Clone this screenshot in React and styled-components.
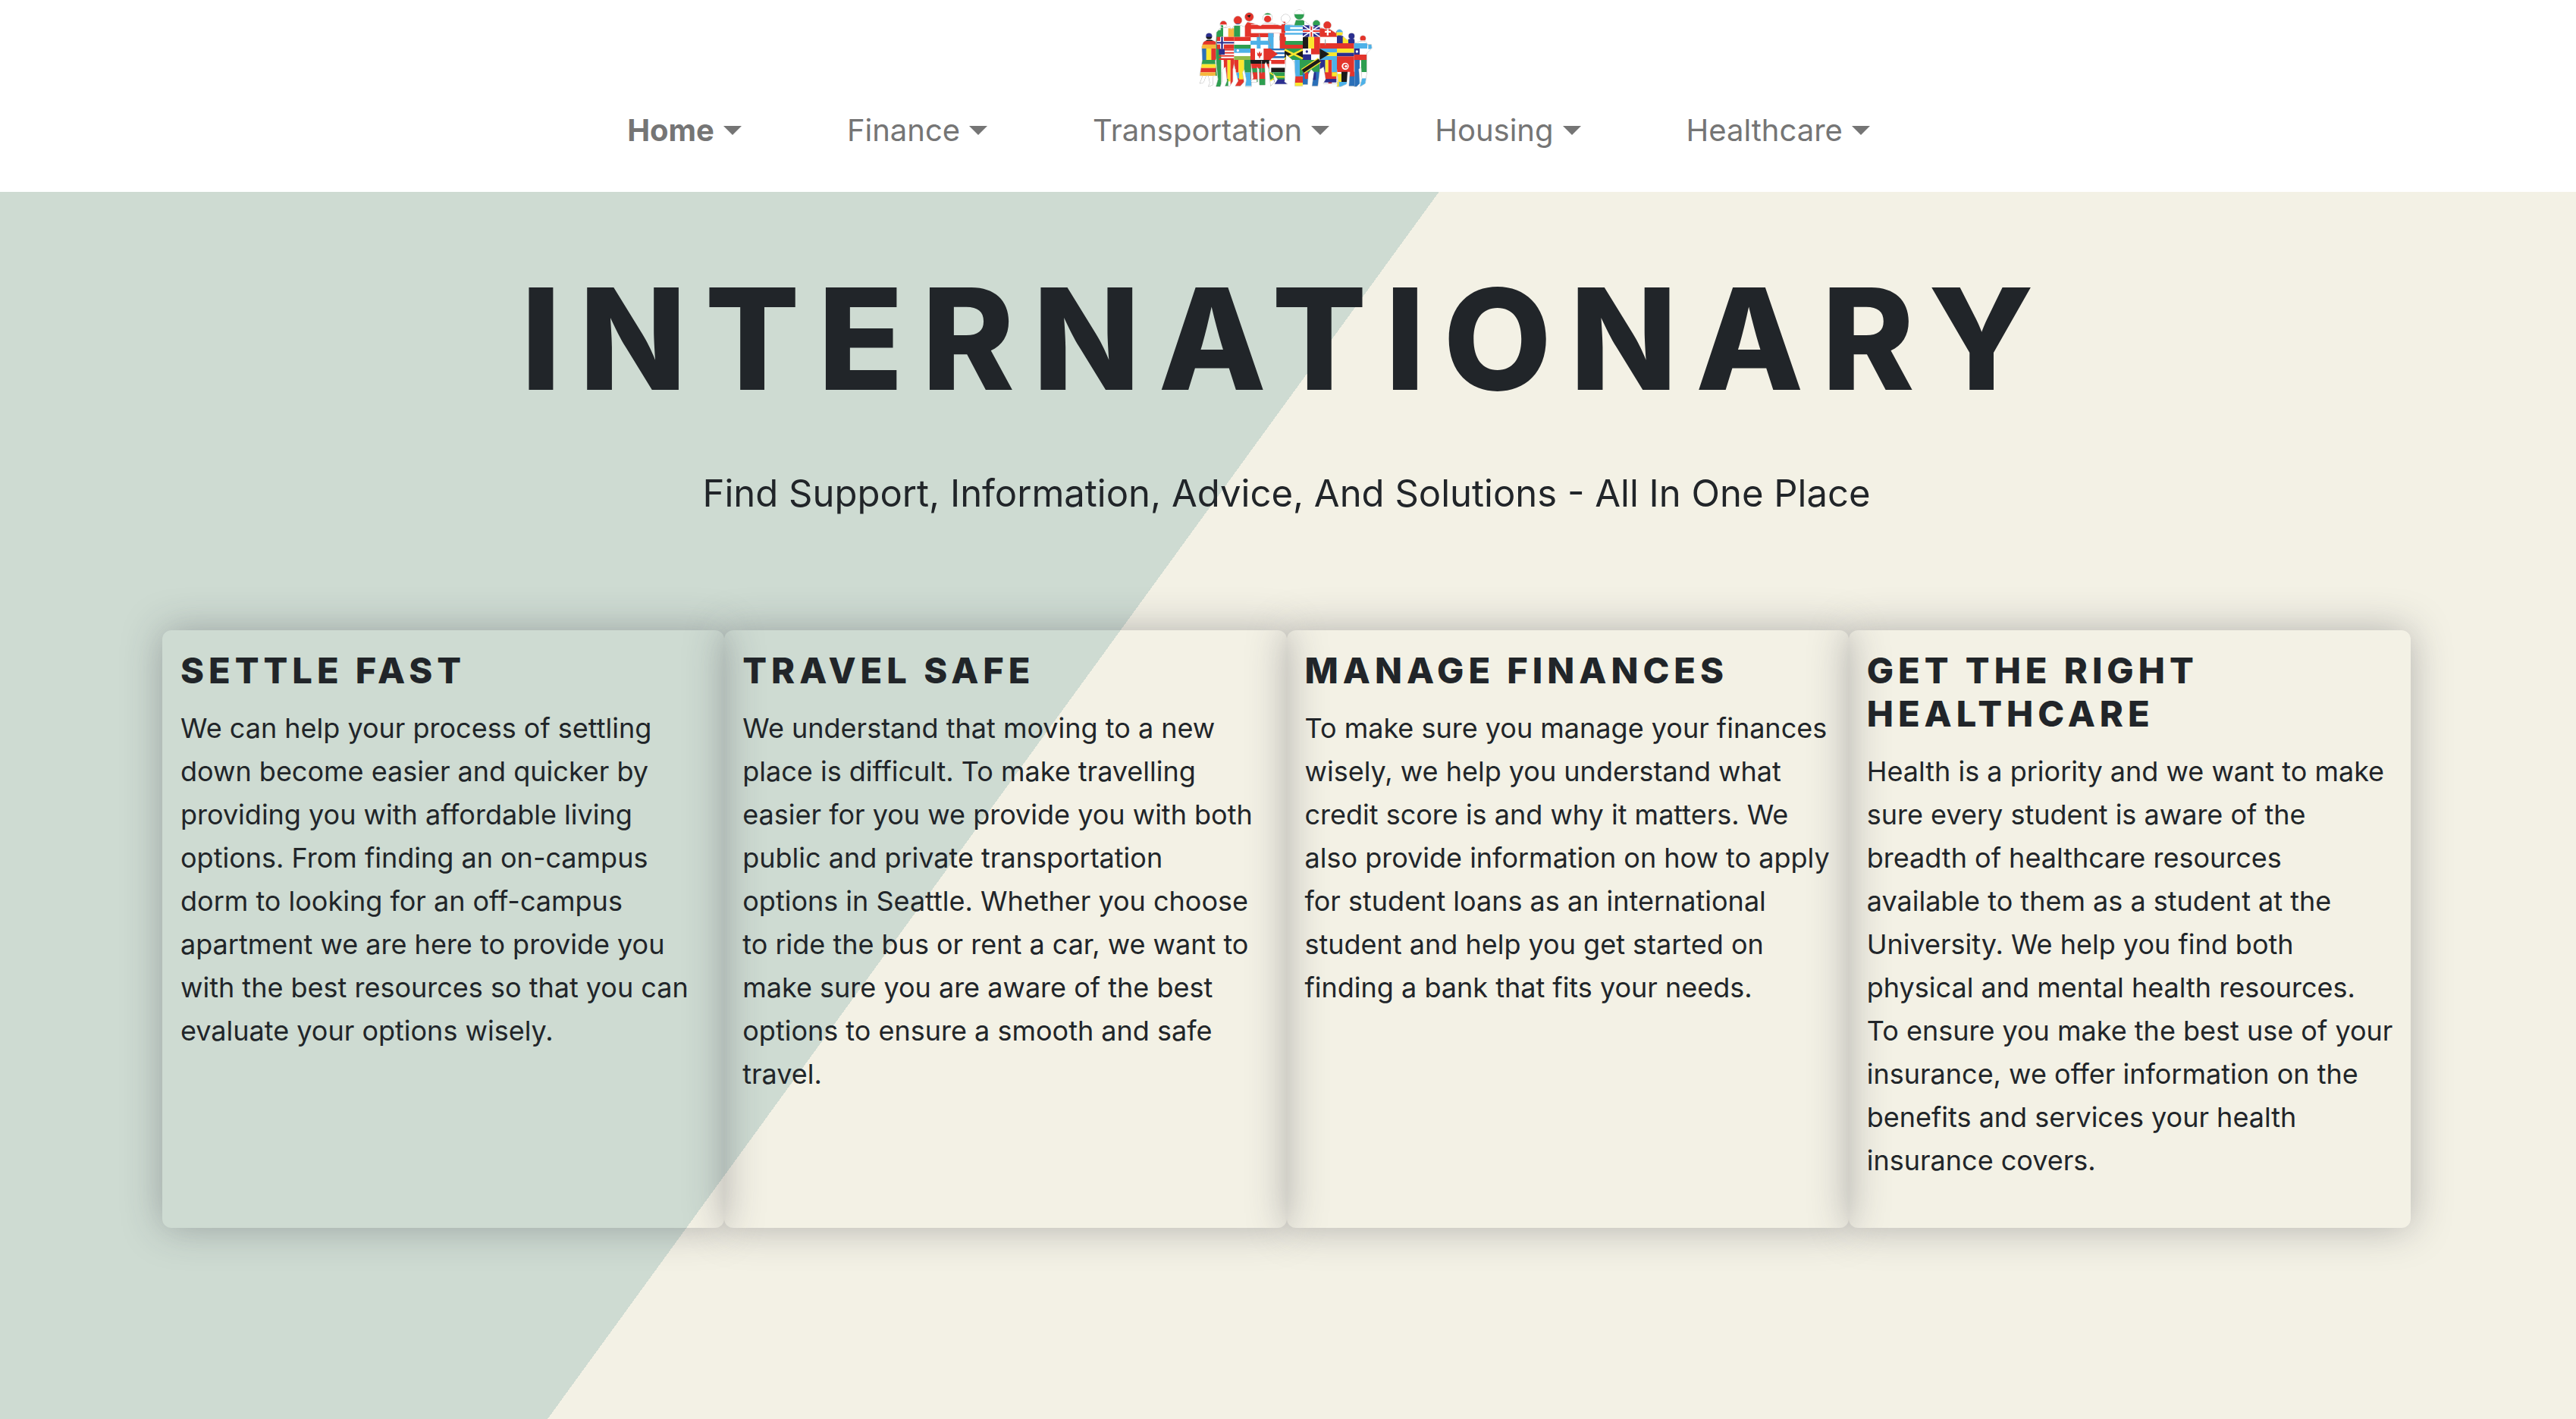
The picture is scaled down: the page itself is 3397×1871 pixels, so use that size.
import React from "react";
import styled, { createGlobalStyle } from "styled-components";

const GlobalStyle = createGlobalStyle`
  *, *::before, *::after { box-sizing: border-box; }
  body {
    margin: 0;
    font-family: Inter, "Liberation Sans", sans-serif;
    color: #212529;
    background: #f3f1e5;
  }
`;

const Page = styled.div`
  min-height: 100vh;
  display: flex;
  flex-direction: column;
`;

const Header = styled.header`
  display: flex;
  flex-direction: column;
  align-items: center;
  padding: 8px 24px 51px;
  background: #ffffff;
`;

const Brand = styled.a`
  display: block;
  width: 240px;
  height: 112px;
`;

const Nav = styled.nav`
  display: flex;
  flex-wrap: wrap;
  justify-content: center;
  gap: 139px;
  padding: 22px 104px 0 0;
`;

const NavButton = styled.button`
  display: flex;
  align-items: center;
  gap: 12px;
  padding: 0;
  border: 0;
  background: none;
  color: #757575;
  font-family: inherit;
  font-size: 40px;
  line-height: 60px;
  font-weight: ${(p) => (p.$active ? 700 : 400)};
  cursor: pointer;

  &::after {
    content: "";
    border-top: 12px solid;
    border-left: 12px solid transparent;
    border-right: 12px solid transparent;
  }
`;

const Hero = styled.main`
  flex: 1;
  display: flex;
  flex-direction: column;
  align-items: center;
  padding: 80px 218px 0 214px;
  background: linear-gradient(126deg, #cedbd2 41.5%, #f3f1e5 41.5%);
`;

const Title = styled.h1`
  margin: 0;
  font-size: 185px;
  line-height: 228px;
  font-weight: 800;
  letter-spacing: 24px;
  text-align: center;
`;

const Subtitle = styled.p`
  margin: 58px 0 0;
  font-size: 49px;
  line-height: 64px;
  text-align: center;
`;

const Cards = styled.section`
  display: grid;
  grid-template-columns: repeat(4, minmax(0, 1fr));
  width: 100%;
  margin-top: 148px;
`;

const Card = styled.article`
  padding: 24px 16px 60px 24px;
  border-radius: 12px;
  box-shadow: 0 0 52px rgba(50, 50, 65, 0.34);
`;

const CardTitle = styled.h2`
  margin: 0 0 20px;
  font-size: 47px;
  line-height: 57px;
  font-weight: 800;
  letter-spacing: 6px;
`;

const CardText = styled.p`
  margin: 0;
  font-size: 36px;
  line-height: 57px;
  white-space: pre-line;
`;

const RED = "#e3342b";
const GREEN = "#2e9e50";
const NAVY = "#2b2f8f";
const SKY = "#4db1e8";
const BLUE = "#2a6fb8";
const YELLOW = "#fbe72e";
const GOLD = "#f6b73c";
const BLACK = "#1b1b1b";
const WHITE = "#ffffff";

// Flag patches: x, y, width, height, colour
const patches = [
  [8, 100, 66, 24, NAVY], [8, 122, 66, 17, BLACK], [8, 138, 66, 15, RED], [8, 152, 66, 16, GOLD],
  [8, 168, 28, 45, BLUE], [35, 168, 20, 45, YELLOW], [55, 168, 20, 45, RED],
  [8, 213, 70, 17, GREEN], [8, 230, 70, 15, YELLOW], [8, 245, 70, 17, RED], [8, 262, 70, 14, GOLD],
  [88, 58, 30, 15, RED], [72, 95, 22, 225, GREEN], [92, 76, 10, 46, GREEN], [122, 88, 24, 34, GOLD],
  [77, 122, 68, 48, RED], [90, 122, 15, 48, WHITE], [77, 138, 68, 14, WHITE], [94, 122, 7, 48, NAVY], [77, 142, 68, 6, NAVY],
  [85, 170, 60, 6, RED], [85, 182, 60, 6, RED], [85, 194, 60, 6, RED], [85, 206, 60, 7, RED], [85, 170, 23, 22, NAVY],
  [104, 213, 15, 85, RED], [119, 213, 12, 85, YELLOW], [131, 213, 14, 107, RED], [104, 288, 18, 30, GREEN],
  [142, 36, 36, 35, RED], [142, 69, 36, 7, BLUE], [145, 78, 24, 44, GREEN], [188, 70, 24, 52, RED],
  [145, 122, 66, 16, RED], [145, 153, 66, 16, GREEN], [145, 168, 66, 17, SKY], [145, 198, 66, 16, "#91ba4b"],
  [145, 213, 18, 50, RED], [163, 213, 22, 50, YELLOW], [185, 213, 28, 50, GREEN], [145, 263, 70, 26, SKY], [145, 286, 40, 32, RED], [187, 286, 26, 30, SKY], [165, 260, 20, 30, YELLOW],
  [186, 24, 40, 48, RED], [210, 74, 136, 17, RED], [210, 107, 136, 16, RED],
  [210, 137, 75, 16, SKY], [235, 122, 15, 46, SKY],
  [210, 168, 18, 45, RED], [262, 168, 28, 45, RED],
  [210, 213, 75, 15, BLACK], [210, 228, 75, 18, RED], [210, 246, 75, 18, GREEN], [210, 262, 75, 28, RED], [235, 288, 50, 32, GREEN],
  [260, 26, 38, 8, GREEN], [280, 107, 22, 61, SKY], [302, 107, 24, 61, WHITE], [326, 122, 24, 46, RED], [332, 62, 16, 45, RED],
  [285, 168, 65, 7, BLUE], [285, 183, 65, 7, BLUE], [285, 198, 65, 8, BLUE],
  [285, 213, 65, 16, RED], [285, 244, 65, 18, BLACK], [285, 262, 60, 30, GREEN], [303, 290, 50, 22, NAVY],
  [345, 76, 72, 7, SKY], [345, 91, 72, 7, SKY], [345, 106, 72, 7, SKY], [345, 76, 22, 22, SKY], [347, 138, 70, 16, GREEN], [347, 153, 70, 16, RED],
  [383, 30, 40, 46, GREEN], [350, 168, 67, 45, GREEN],
  [385, 213, 32, 66, SKY], [385, 278, 34, 26, RED], [385, 303, 34, 16, YELLOW], [405, 213, 14, 60, GREEN],
  [455, 50, 36, 28, GREEN], [417, 76, 68, 46, NAVY], [417, 92, 68, 14, WHITE], [443, 76, 16, 46, WHITE], [417, 96, 68, 6, RED], [448, 76, 6, 46, RED],
  [417, 122, 22, 46, BLACK], [439, 122, 23, 46, YELLOW], [462, 122, 23, 46, RED],
  [450, 168, 35, 23, RED], [417, 191, 33, 22, NAVY],
  [417, 213, 66, 48, GREEN], [417, 260, 66, 58, BLUE], [425, 262, 14, 26, RED], [455, 262, 14, 30, NAVY],
  [498, 58, 34, 30, RED], [484, 88, 68, 34, RED], [512, 88, 7, 28, WHITE], [504, 98, 24, 7, WHITE],
  [484, 147, 68, 21, RED], [484, 168, 68, 15, SKY], [484, 183, 68, 15, YELLOW], [484, 198, 68, 16, SKY],
  [484, 213, 22, 55, NAVY], [506, 213, 12, 55, YELLOW], [518, 213, 14, 105, RED], [532, 213, 20, 50, SKY], [500, 262, 50, 28, RED], [500, 288, 50, 14, NAVY], [532, 262, 20, 16, YELLOW],
  [550, 92, 28, 12, SKY], [550, 104, 28, 14, YELLOW], [552, 116, 26, 32, NAVY], [575, 122, 22, 25, YELLOW], [597, 106, 25, 42, NAVY],
  [552, 147, 68, 21, RED], [552, 168, 68, 17, YELLOW], [552, 185, 68, 14, NAVY], [552, 199, 68, 62, RED], [570, 260, 24, 42, BLACK], [552, 268, 18, 50, YELLOW], [560, 300, 34, 18, SKY], [600, 260, 22, 20, RED], [600, 278, 22, 40, BLUE],
  [640, 116, 30, 20, RED], [620, 147, 52, 21, SKY], [620, 168, 22, 24, NAVY], [620, 192, 50, 22, RED], [622, 213, 20, 105, BLUE], [648, 213, 22, 48, GREEN], [640, 286, 30, 32, SKY], [676, 152, 14, 18, SKY],
];

// People in the crowd: head centre x, head centre y, head radius
const heads = [
  [46, 119, 12], [103, 72, 13], [124, 90, 8], [160, 56, 16], [205, 43, 17], [278, 46, 18],
  [349, 50, 17], [403, 34, 19], [471, 70, 14], [514, 76, 15], [562, 106, 13], [610, 119, 12], [655, 128, 11],
];

const bodies = [
  "M24 143 L38 134 H56 L72 142 L74 206 L70 218 L77 275 H10 L20 214 L18 160Z M22 275 L34 275 L24 302 L10 306Z M44 275 H62 L60 312 L44 318 L50 304Z",
  "M76 104 L92 86 H116 L134 92 L148 120 V212 L140 250 V298 L128 316 H110 L118 296 L112 240 L98 250 L96 300 L90 318 H74 L82 290 L76 230 L74 150Z",
  "M134 92 L146 78 H174 L192 86 L212 122 V232 L212 286 L214 318 H190 L194 290 L186 250 L178 262 L184 300 L170 316 H150 L162 296 L148 240 L140 200Z",
  "M186 82 L198 64 L222 70 L252 80 L282 100 V200 L266 230 L268 290 L268 312 H246 L244 250 L236 240 L238 300 H212 L222 284 L212 220Z",
  "M248 80 L266 68 H294 L330 78 L350 68 V200 L346 262 L346 286 L344 300 L356 308 H306 L318 290 L300 264 L304 300 L290 316 L284 250 L262 200Z",
  "M334 72 L384 76 L390 56 H418 L452 82 L484 92 V220 L418 250 L416 316 H386 L388 276 L384 220 L350 190 L344 160Z",
  "M418 110 L456 84 H486 L506 92 H524 L552 110 V300 L560 306 H498 L508 290 L500 240 L484 250 L476 316 H454 L462 262 L450 250 L438 270 L436 310 H416Z",
  "M546 124 L554 118 H574 L592 134 L602 130 H620 L624 150 L622 316 H600 L604 260 H594 L590 308 L568 318 H552 L558 300 L550 230Z",
  "M618 150 L644 140 H664 L672 150 L676 164 L674 152 L688 152 L690 166 L670 186 L670 260 L664 306 L644 318 L652 286 L648 240 L638 250 L642 306 L630 318 H620Z",
];

function Logo() {
  return (
    <svg viewBox="0 0 720 336" width="240" height="112" role="img" aria-label="Internationary">
      <defs>
        <clipPath id="crowd">
          {heads.map(([x, y, r]) => (
            <circle key={x} cx={x} cy={y} r={r} />
          ))}
          {bodies.map((d) => (
            <path key={d} d={d} />
          ))}
        </clipPath>
      </defs>
      <g fill="none" stroke="#b5b5b5" strokeWidth="3">
        {heads.map(([x, y, r]) => (
          <circle key={x} cx={x} cy={y} r={r} />
        ))}
        {bodies.map((d) => (
          <path key={d} d={d} />
        ))}
      </g>
      <g clipPath="url(#crowd)">
        <rect width="720" height="336" fill={WHITE} />
        {patches.map(([x, y, w, h, fill]) => (
          <rect key={`${x}-${y}-${w}-${h}`} x={x} y={y} width={w} height={h} fill={fill} />
        ))}
        <circle cx="278" cy="52" r="14" fill={RED} />
        <path d="M196 38 L212 34 L206 46Z" fill={BLACK} />
        <path d="M384 12 h38 v20 h-38Z" fill={WHITE} />
        <path d="M236 182 l6 6 4-10 4 10 6-6 -2 14 -6 4 v6 h-4 v-6 l-6-4Z" fill={RED} />
        <path d="M285 166 L318 190 L285 214Z" fill={RED} />
        <path d="M345 168 L384 190 L345 213Z M417 168 L384 190 L417 213Z" fill={BLACK} />
        <path d="M345 172 L417 208 M345 208 L417 172" stroke={YELLOW} strokeWidth="8" />
        <path d="M285 262 L312 280 L285 298 M312 280 H346" stroke={YELLOW} strokeWidth="5" fill="none" />
        <path d="M417 76 L485 122 M485 76 L417 122" stroke={WHITE} strokeWidth="5" />
        <path d="M417 258 L483 214" stroke={YELLOW} strokeWidth="22" />
        <path d="M417 258 L483 214" stroke={BLACK} strokeWidth="14" />
        <circle cx="433" cy="180" r="5" fill={NAVY} />
        <circle cx="467" cy="202" r="5" fill={WHITE} />
        <path d="M484 168 L522 190 L484 213Z" fill={BLACK} />
        <circle cx="585" cy="238" r="14" fill={WHITE} />
        <circle cx="586" cy="238" r="9" fill={RED} />
        <circle cx="588" cy="238" r="5" fill={WHITE} />
        <circle cx="631" cy="180" r="5" fill={WHITE} />
        <circle cx="160" cy="176" r="5" fill={WHITE} />
        <path d="M244 110 l4 24 M326 118 v18 M506 132 v22 M280 130 l10 30 M254 216 v50" stroke="#9a9a9a" strokeWidth="3" />
        <path d="M288 216 V262 M100 220 V262 M148 250 V300 M350 214 V262" stroke={WHITE} strokeWidth="8" />
      </g>
    </svg>
  );
}

const menus = ["Home", "Finance", "Transportation", "Housing", "Healthcare"];

const topics = [
  {
    title: "SETTLE FAST",
    text: "We can help your process of settling down become easier and quicker by providing you with affordable living options. From finding an on-campus dorm to looking for an off-campus apartment we are here to provide you with the best resources so that you can evaluate your options wisely.",
  },
  {
    title: "TRAVEL SAFE",
    text: "We understand that moving to a new place is difficult. To make travelling easier for you we provide you with both public and private transportation\noptions in Seattle. Whether you choose to ride the bus or rent a car, we want to make sure you are aware of the best options to ensure a smooth and safe travel.",
  },
  {
    title: "MANAGE FINANCES",
    text: "To make sure you manage your finances wisely, we help you understand what credit score is and why it matters. We also provide information on how to apply for student loans as an international student and help you get started on finding a bank that fits your needs.",
  },
  {
    title: "GET THE RIGHT HEALTHCARE",
    text: "Health is a priority and we want to make sure every student is aware of the breadth of healthcare resources available to them as a student at the University. We help you find both physical and mental health resources.\nTo ensure you make the best use of your insurance, we offer information on the benefits and services your health insurance covers.",
  },
];

export default function App() {
  return (
    <Page>
      <GlobalStyle />
      <Header>
        <Brand href="#">
          <Logo />
        </Brand>
        <Nav>
          {menus.map((name, i) => (
            <NavButton key={name} type="button" aria-haspopup="true" $active={i === 0}>
              {name}
            </NavButton>
          ))}
        </Nav>
      </Header>
      <Hero>
        <Title>INTERNATIONARY</Title>
        <Subtitle>Find Support, Information, Advice, And Solutions - All In One Place</Subtitle>
        <Cards>
          {topics.map(({ title, text }) => (
            <Card key={title}>
              <CardTitle>{title}</CardTitle>
              <CardText>{text}</CardText>
            </Card>
          ))}
        </Cards>
      </Hero>
    </Page>
  );
}
